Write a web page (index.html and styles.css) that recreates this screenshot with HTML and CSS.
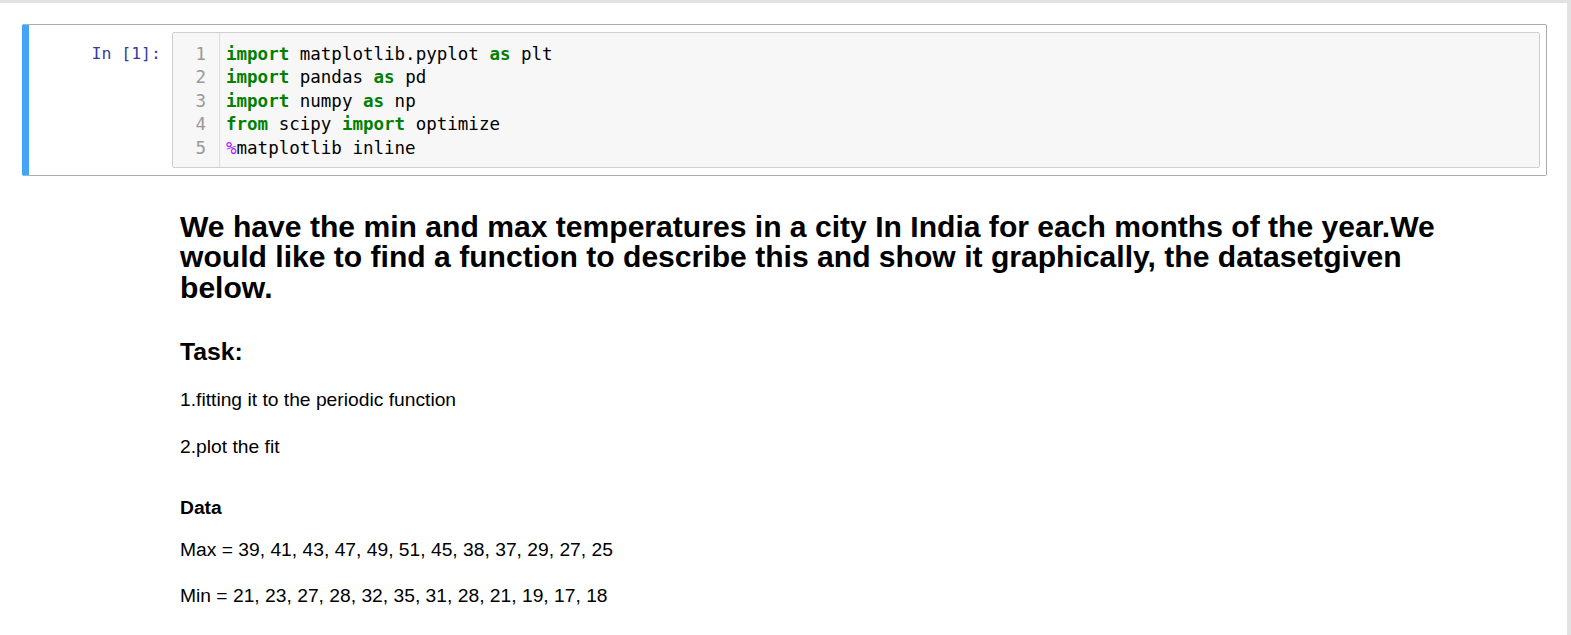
FILE: index.html
```html
<!DOCTYPE html>
<html>
<head>
<meta charset="utf-8">
<link rel="stylesheet" href="styles.css">
</head>
<body>
<div class="page">
  <div class="cell code-cell">
    <div class="prompt">In&nbsp;[1]:</div>
    <div class="input-area">
      <div class="gutter">
        <div>1</div><div>2</div><div>3</div><div>4</div><div>5</div>
      </div>
      <div class="code">
        <div><span class="kw">import</span> matplotlib.pyplot <span class="kw">as</span> plt</div>
        <div><span class="kw">import</span> pandas <span class="kw">as</span> pd</div>
        <div><span class="kw">import</span> numpy <span class="kw">as</span> np</div>
        <div><span class="kw">from</span> scipy <span class="kw">import</span> optimize</div>
        <div><span class="magic">%</span>matplotlib inline</div>
      </div>
    </div>
  </div>
  <div class="md">
    <h2 class="title">We have the min and max temperatures in a city In India for each months of the year.We would like to find a function to describe this and show it graphically, the datasetgiven below.</h2>
    <h3 class="task">Task:</h3>
    <p class="p1">1.fitting it to the periodic function</p>
    <p class="p2">2.plot the fit</p>
    <h4 class="data">Data</h4>
    <p class="p3">Max = 39, 41, 43, 47, 49, 51, 45, 38, 37, 29, 27, 25</p>
    <p class="p4">Min = 21, 23, 27, 28, 32, 35, 31, 28, 21, 19, 17, 18</p>
  </div>
</div>
</body>
</html>
```
FILE: styles.css
```css
html, body {
  margin: 0;
  padding: 0;
  background: #e2e2e2;
}
body {
  padding-top: 3px;
  height: 632px;
  overflow: hidden;
}
.page {
  background: #ffffff;
  width: 1567px;
  height: 632px;
  padding: 21px 0 0 22px;
  box-sizing: border-box;
}
.cell {
  width: 1525px;
  height: 152px;
  box-sizing: border-box;
  border: 1px solid #ababab;
  border-left: 7px solid #42a5f5;
  border-radius: 2px;
  display: flex;
  padding: 7px 6px 7px 0;
}
.prompt {
  width: 143px;
  flex: none;
  box-sizing: border-box;
  padding-right: 11px;
  text-align: right;
  font-family: "DejaVu Sans Mono", monospace;
  font-size: 16.5px;
  color: #303f9f;
  line-height: 23.4px;
  padding-top: 10px;
}
.input-area {
  flex: 1;
  background: #f7f7f7;
  border: 1px solid #cfcfcf;
  border-radius: 2px;
  display: flex;
  font-family: "DejaVu Sans Mono", monospace;
  font-size: 17.5px;
  line-height: 23.4px;
}
.gutter {
  width: 46px;
  flex: none;
  border-right: 1px solid #dddddd;
  color: #999999;
  text-align: right;
  padding: 10px 0 0 0;
}
.gutter div {
  padding-right: 13px;
}
.code {
  padding: 10px 0 0 6px;
  color: #000;
}
.kw {
  color: #008000;
  font-weight: bold;
}
.magic {
  color: #aa22ff;
}
.md {
  width: 1285px;
  padding-left: 158px;
  font-family: "Liberation Sans", Arial, sans-serif;
  color: #000;
}
.title {
  font-size: 30.1px;
  line-height: 30.25px;
  font-weight: bold;
  margin: 36px 0 0 0;
}
.task {
  font-size: 24.75px;
  line-height: 24.75px;
  font-weight: bold;
  margin: 37px 0 0 0;
}
.md p {
  font-size: 19.25px;
  line-height: 27.5px;
  margin: 0;
}
.md .p1 { margin-top: 21.5px; }
.md .p2 { margin-top: 19px; }
.data {
  font-size: 19.25px;
  line-height: 19.25px;
  font-weight: bold;
  margin: 38px 0 0 0;
}
.md .p3 { margin-top: 18.5px; }
.md .p4 { margin-top: 18.5px; }
```
